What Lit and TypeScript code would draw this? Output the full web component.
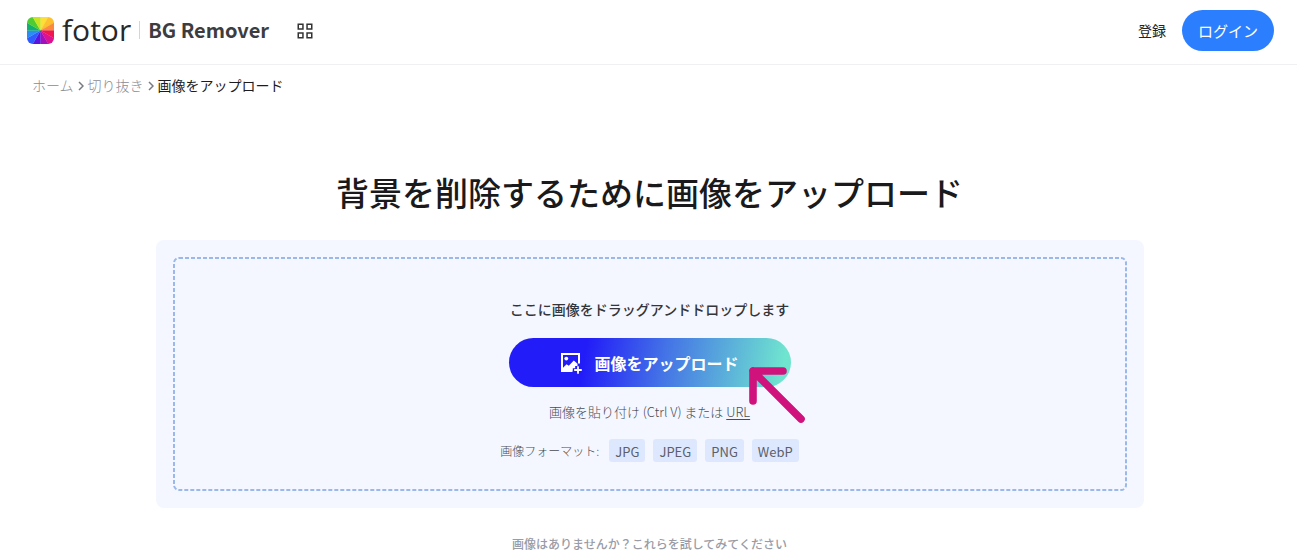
import { LitElement, html, css, svg } from "lit";
import { customElement } from "lit/decorators.js";

const WHEEL = [
  "#fddf35", "#fdc02f", "#fb8a3c", "#f0164f", "#dc1290", "#a30fb8",
  "#5a14e0", "#2f5bff", "#2a8cf5", "#12b070", "#4fcc32", "#c8e41e",
];

@customElement("color-wheel-logo")
class ColorWheelLogo extends LitElement {
  static styles = css`
    :host { display: block; }
    .mark { display: block; border-radius: 6px; }
  `;

  render() {
    const point = (deg: number) => {
      const a = (deg * Math.PI) / 180;
      return `${13 + 24 * Math.sin(a)} ${13 - 24 * Math.cos(a)}`;
    };
    return html`
      <svg class="mark" width="27" height="27" viewBox="0 0 26 26" aria-hidden="true">
        ${WHEEL.map((color, i) => svg`
          <path fill=${color} stroke=${color} stroke-width="0.2"
            d="M13 13L${point(i * 30)}L${point(i * 30 + 30)}Z"></path>`)}
      </svg>
    `;
  }
}

@customElement("app-root")
class AppRoot extends LitElement {
  static styles = css`
    :host {
      display: block;
      min-height: 100vh;
      background: #fff;
      color: #222;
      font-family: "Noto Sans CJK JP", sans-serif;
    }
    * { box-sizing: border-box; }
    a { color: inherit; text-decoration: none; }
    button { font-family: inherit; border: 0; cursor: pointer; }

    .header {
      display: flex;
      align-items: center;
      height: 65px;
      padding: 0 23px 4px 27px;
      border-bottom: 1px solid #f0f0f2;
    }
    .brand { display: flex; align-items: center; }
    .wordmark {
      margin-left: 8px;
      font-family: "Open Sans", sans-serif;
      font-size: 30px;
      line-height: 40px;
      color: #26282b;
    }
    .divider { width: 1px; height: 18px; margin: 0 8px; background: #d5d5d8; }
    .product { font-size: 20px; line-height: 30px; font-weight: 700; color: #3d3d3f; }
    .apps { display: flex; margin: 2px 0 0 28px; padding: 0; background: none; }
    .account { display: flex; align-items: center; gap: 16px; margin-left: auto; }
    .signup { font-size: 14px; font-weight: 400; }
    .login {
      padding: 0 16px;
      height: 41px;
      border-radius: 21px;
      background: #2b7fff;
      color: #fff;
      font-size: 15px;
    }

    .crumbs {
      display: flex;
      align-items: center;
      gap: 4px;
      padding: 9px 32px 0;
      font-size: 14px;
      line-height: 22px;
      font-weight: 300;
      color: #8a8c94;
    }
    .chevron { margin-top: 2px; }
    .current { color: #1c1c1e; font-weight: 400; }

    .main {
      display: flex;
      flex-direction: column;
      align-items: center;
      padding: 72px 16px 0 18px;
    }
    .title {
      margin: 0;
      font-size: 33px;
      line-height: 48px;
      font-weight: 500;
      color: #1a1a1c;
      text-align: center;
    }
    .panel {
      width: 100%;
      max-width: 988px;
      margin-top: 24px;
      padding: 17px;
      border-radius: 8px;
      background: #f4f7ff;
    }
    .drop {
      position: relative;
      display: flex;
      flex-direction: column;
      align-items: center;
      padding: 41px 16px 29px;
    }
    .outline {
      position: absolute;
      inset: 0;
      width: 100%;
      height: 100%;
      pointer-events: none;
    }
    .dashes {
      width: calc(100% - 2px);
      height: calc(100% - 2px);
      fill: none;
      stroke: #9bb8ea;
      stroke-width: 2px;
      stroke-dasharray: 4 2;
    }
    .hint { margin: 0; font-size: 14px; line-height: 22px; font-weight: 500; color: #333539; }
    .action { position: relative; margin-top: 18px; }
    .upload {
      display: flex;
      align-items: center;
      justify-content: center;
      gap: 12px;
      width: 282px;
      height: 49px;
      padding: 0;
      border-radius: 25px;
      background: linear-gradient(100deg, #221cf8 27%, #4474e6 55%, #6fe4cf 96%);
      color: #fff;
      font-size: 16px;
      font-weight: 700;
    }
    .pointer { position: absolute; left: 239px; top: 28px; pointer-events: none; }
    .paste { margin: 15px 0 0; font-size: 13px; line-height: 20px; font-weight: 300; color: #4a4c54; }
    .url { text-decoration: underline; text-underline-offset: 2px; }
    .formats {
      display: flex;
      align-items: center;
      gap: 10px;
      margin-top: 17px;
      font-size: 13px;
      line-height: 20px;
      font-weight: 300;
      color: #4a4c54;
    }
    .label { font-size: 12px; }
    .list { display: flex; gap: 8px; margin: 0; padding: 0; list-style: none; }
    .format {
      padding: 2px 6px 0;
      border-radius: 3px;
      background: #dde8fe;
      font-weight: 400;
      line-height: 21px;
      color: #5c5f6a;
    }
    .samples {
      margin: 26px 0 0;
      font-size: 12px;
      line-height: 20px;
      font-weight: 500;
      color: #999ba5;
    }
  `;

  private formats = ["JPG", "JPEG", "PNG", "WebP"];

  private chevron() {
    return html`<svg class="chevron" width="6" height="10" viewBox="0 0 6 10" fill="none" stroke="#777a82" stroke-width="1.5" aria-hidden="true">
      <path d="M1 1l4 4-4 4"></path>
    </svg>`;
  }

  render() {
    return html`
      <header class="header">
        <a class="brand" href="#" aria-label="fotor">
          <color-wheel-logo></color-wheel-logo>
          <span class="wordmark">fotor</span>
        </a>
        <span class="divider"></span>
        <a class="product" href="#">BG Remover</a>
        <button class="apps" type="button" aria-label="Apps">
          <svg width="16" height="16" viewBox="0 0 16 16" fill="none" stroke="#333" stroke-width="1.5">
            <path d="M1.25 1.25h4.7v4.7h-4.7zM10.05 1.25h4.7v4.7h-4.7zM1.25 10.05h4.7v4.7h-4.7zM10.05 10.05h4.7v4.7h-4.7z"></path>
          </svg>
        </button>
        <div class="account">
          <a class="signup" href="#">登録</a>
          <button class="login" type="button">ログイン</button>
        </div>
      </header>

      <nav class="crumbs" aria-label="Breadcrumb">
        <a href="#">ホーム</a>${this.chevron()}
        <a href="#">切り抜き</a>${this.chevron()}
        <span class="current" aria-current="page">画像をアップロード</span>
      </nav>

      <main class="main">
        <h1 class="title">背景を削除するために画像をアップロード</h1>
        <section class="panel">
          <div class="drop">
            <svg class="outline" aria-hidden="true">
              <rect class="dashes" x="1" y="1" rx="5"></rect>
            </svg>
            <p class="hint">ここに画像をドラッグアンドドロップします</p>
            <div class="action">
              <button class="upload" type="button">
                <svg width="22" height="22" viewBox="0 0 22 22" aria-hidden="true">
                  <path d="M19 11.5V2H2v17h10.5" fill="none" stroke="#fff" stroke-width="2"></path>
                  <circle cx="6.3" cy="6.6" r="1.9" fill="#fff"></circle>
                  <path d="M3 18.5v-2.8l3.6-3.4 2.2 1.4 5-5.2 3.7 3.2v2.3h-2.3v2.3h-2.4v2.2z" fill="#fff"></path>
                  <path d="M18 14.2v7.6M14.2 18h7.6" fill="none" stroke="#fff" stroke-width="1.8"></path>
                </svg>
                画像をアップロード
              </button>
              <svg class="pointer" width="58" height="58" viewBox="0 0 58 58" fill="none" stroke="#d0127c"
                stroke-width="7.6" stroke-linecap="round" stroke-linejoin="round" aria-hidden="true">
                <path d="M35 5H5V35M5 5L53 53"></path>
              </svg>
            </div>
            <p class="paste">画像を貼り付け (Ctrl V) または <a class="url" href="#">URL</a></p>
            <div class="formats">
              <span class="label">画像フォーマット:</span>
              <ul class="list">
                ${this.formats.map((f) => html`<li class="format">${f}</li>`)}
              </ul>
            </div>
          </div>
        </section>
        <p class="samples">画像はありませんか？これらを試してみてください</p>
      </main>
    `;
  }
}
